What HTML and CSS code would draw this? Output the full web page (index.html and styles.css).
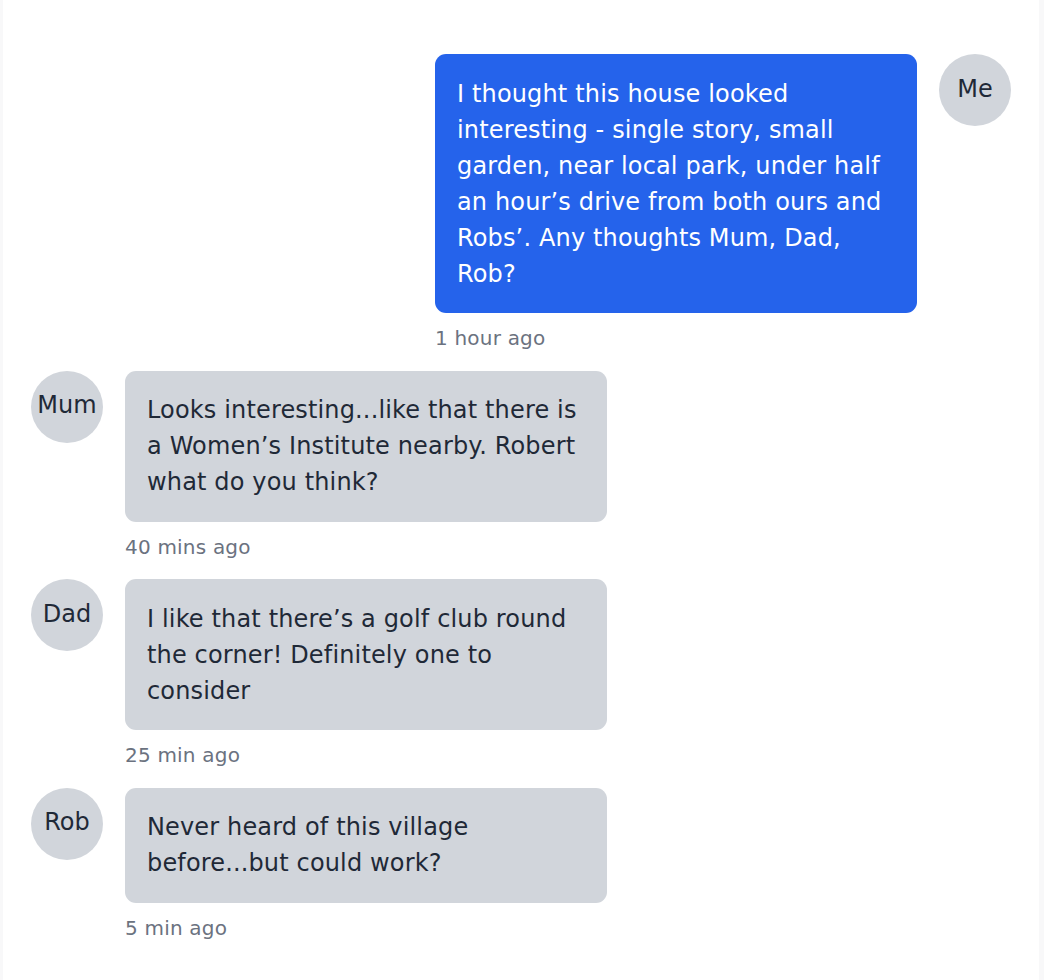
FILE: index.html
```html
<!DOCTYPE html>
<html lang="en">
<head>
<meta charset="utf-8">
<title>Chat</title>
<link rel="stylesheet" href="styles.css">
</head>
<body>
<main class="chat">
  <div class="msg msg-out">
    <div class="body">
      <div class="bubble bubble-out">I thought this house looked interesting - single story, small garden, near local park, under half an hour’s drive from both ours and Robs’. Any thoughts Mum, Dad, Rob?</div>
      <div class="time">1 hour ago</div>
    </div>
    <div class="avatar">Me</div>
  </div>
  <div class="msg">
    <div class="avatar">Mum</div>
    <div class="body">
      <div class="bubble">Looks interesting...like that there is a Women’s Institute nearby. Robert what do you think?</div>
      <div class="time">40 mins ago</div>
    </div>
  </div>
  <div class="msg">
    <div class="avatar">Dad</div>
    <div class="body">
      <div class="bubble">I like that there’s a golf club round the corner! Definitely one to consider</div>
      <div class="time">25 min ago</div>
    </div>
  </div>
  <div class="msg">
    <div class="avatar">Rob</div>
    <div class="body">
      <div class="bubble">Never heard of this village before...but could work?</div>
      <div class="time">5 min ago</div>
    </div>
  </div>
</main>
</body>
</html>
```
FILE: styles.css
```css
html, body {
  margin: 0;
  padding: 0;
}
body {
  background: #f8f8f9;
  font-family: "DejaVu Sans", "Liberation Sans", sans-serif;
  color: #1f2937;
}
.chat {
  margin-left: 3px;
  width: 1036px;
  min-height: 980px;
  box-sizing: border-box;
  background: #ffffff;
  padding: 54px 28px 28px;
  display: flex;
  flex-direction: column;
  gap: 18.5px;
}
.msg {
  display: flex;
  align-items: flex-start;
  gap: 22px;
}
.msg-out {
  justify-content: flex-end;
}
.body {
  display: flex;
  flex-direction: column;
  width: 482px;
}
.bubble {
  box-sizing: border-box;
  width: 482px;
  padding: 21.5px 22px;
  background: #d1d5db;
  color: #1f2937;
  border-radius: 11px;
  font-size: 24px;
  line-height: 36px;
  letter-spacing: 0.15px;
}
.bubble-out {
  background: #2563eb;
  color: #ffffff;
}
.time {
  margin-top: 11px;
  font-size: 20px;
  line-height: 28px;
  color: #6b7280;
  letter-spacing: 0.2px;
}
.avatar {
  flex: 0 0 72px;
  width: 72px;
  height: 72px;
  border-radius: 50%;
  background: #d1d5db;
  color: #1f2937;
  display: flex;
  align-items: center;
  justify-content: center;
  font-size: 24px;
  line-height: 1;
  padding-bottom: 3px;
  box-sizing: border-box;
}
```
